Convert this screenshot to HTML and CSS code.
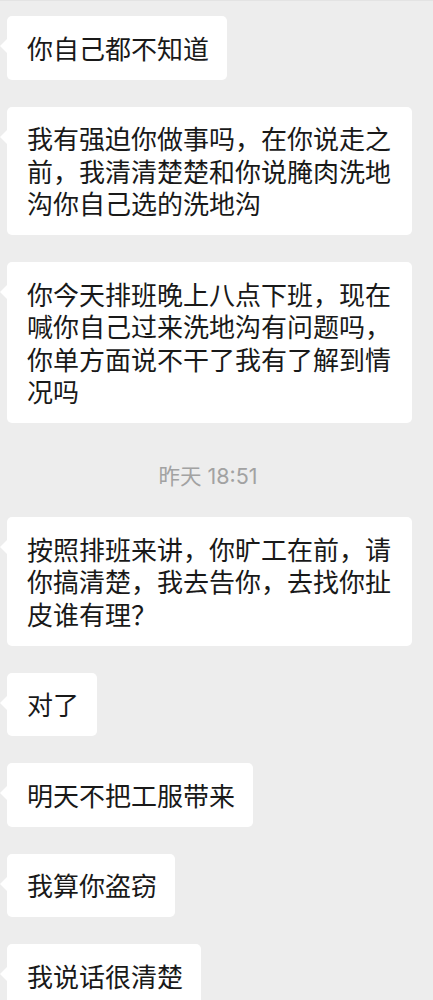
FILE: index.html
```html
<!DOCTYPE html>
<html lang="zh-CN">
<head>
    <meta charset="UTF-8">
    <meta name="viewport" content="width=device-width, initial-scale=1.0">
    <title>聊天</title>
    <link rel="stylesheet" href="styles.css">
</head>
<body>
    <div class="chat">
        <div class="bubble">你自己都不知道</div>
        <div class="bubble">我有强迫你做事吗，在你说走之前，我清清楚楚和你说腌肉洗地沟你自己选的洗地沟</div>
        <div class="bubble">你今天排班晚上八点下班，现在喊你自己过来洗地沟有问题吗，你单方面说不干了我有了解到情况吗</div>
        <div class="time">昨天 18:51</div>
        <div class="bubble">按照排班来讲，你旷工在前，请你搞清楚，我去告你，去找你扯皮谁有理？</div>
        <div class="bubble">对了</div>
        <div class="bubble">明天不把工服带来</div>
        <div class="bubble">我算你盗窃</div>
        <div class="bubble">我说话很清楚</div>
    </div>
</body>
</html>
```

FILE: styles.css
```css
body {
    margin: 0;
    background-color: #ededed;
    font-family: "Noto Sans CJK SC", "Noto Sans", sans-serif;
    color: #191919;
}
.chat {
    display: flex;
    flex-direction: column;
    align-items: flex-start;
    gap: 27px;
    padding: 15px 0 40px 7px;
    border-top: 1px solid #e3e3e3;
}
.bubble {
    position: relative;
    box-sizing: border-box;
    max-width: 405px;
    padding: 15.5px 18px 15.5px 20px;
    background: #fff;
    border-radius: 5px;
    font-size: 26px;
    line-height: 32.5px;
}
.bubble::before {
    content: "";
    position: absolute;
    left: -7px;
    top: 23px;
    border-style: solid;
    border-width: 7px 7px 7px 0;
    border-color: transparent #fff transparent transparent;
}
.time {
    align-self: center;
    padding: 13px 0 0;
    margin-left: -24px;
    font-family: Inter, "Noto Sans CJK SC", sans-serif;
    font-size: 21.5px;
    line-height: 27px;
    color: #a2a2a2;
}
```
